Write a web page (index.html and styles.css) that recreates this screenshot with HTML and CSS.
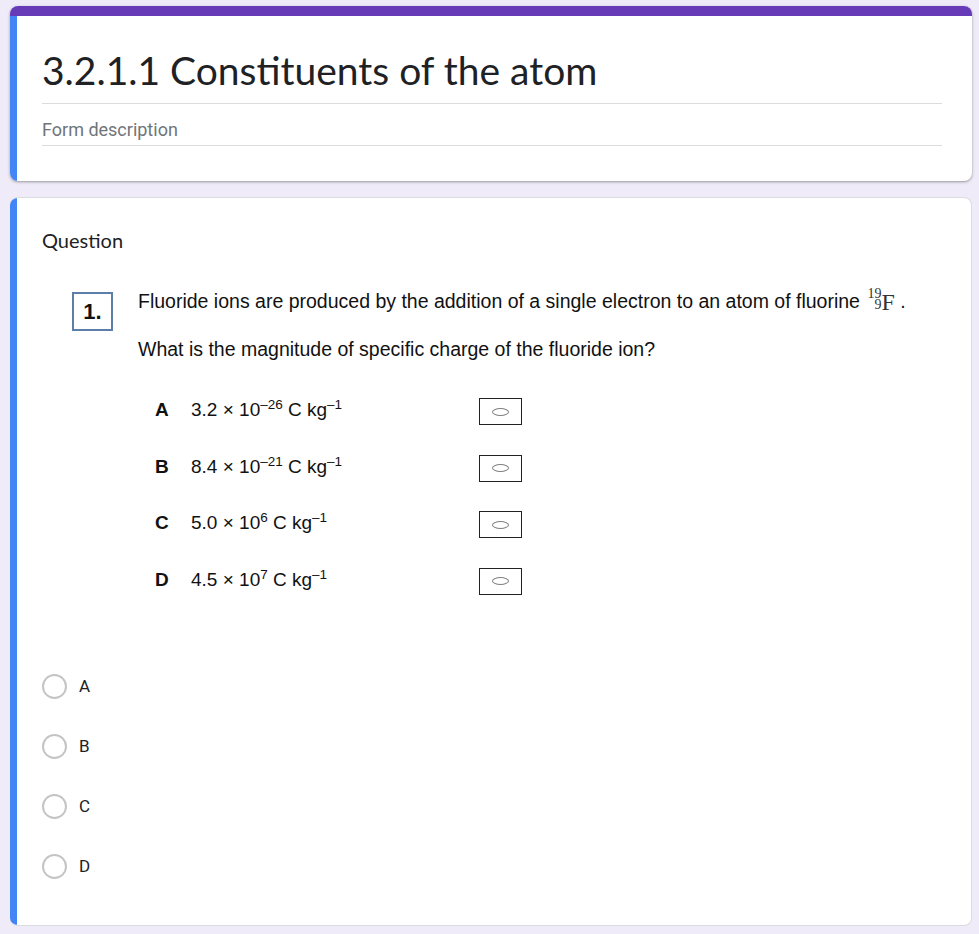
FILE: index.html
```html
<!DOCTYPE html>
<html lang="en">

<head>
    <meta charset="UTF-8">
    <meta name="viewport" content="width=device-width, initial-scale=1.0">
    <title>3.2.1.1 Constituents of the atom</title>
    <link rel="stylesheet" href="styles.css">
</head>

<body>
    <div class="page">
        <!-- Form header -->
        <div class="card header-card">
            <div class="card-accent"></div>
            <div class="card-body">
                <h1 class="form-title">3.2.1.1 Constituents of the atom</h1>
                <div class="form-desc">Form description</div>
            </div>
        </div>

        <!-- Question card -->
        <div class="card question-card">
            <div class="card-body">
                <div class="question-title">Question</div>

                <div class="question-image">
                    <div class="q-num">1.</div>
                    <div class="q-content">
                        <p class="q-line">Fluoride ions are produced by the addition of a single electron to an atom of fluorine
                            <span class="nuclide-nums"><span>19</span><span>9</span></span><span class="nuclide-sym">F</span> .</p>
                        <p class="q-line q-ask">What is the magnitude of specific charge of the fluoride ion?</p>

                        <div class="answers">
                            <div class="answer-row">
                                <span class="answer-key">A</span>
                                <span class="answer-val">3.2 × 10<sup>–26</sup> C kg<sup>–1</sup></span>
                                <span class="answer-box"><span class="oval"></span></span>
                            </div>
                            <div class="answer-row">
                                <span class="answer-key">B</span>
                                <span class="answer-val">8.4 × 10<sup>–21</sup> C kg<sup>–1</sup></span>
                                <span class="answer-box"><span class="oval"></span></span>
                            </div>
                            <div class="answer-row">
                                <span class="answer-key">C</span>
                                <span class="answer-val">5.0 × 10<sup>6</sup> C kg<sup>–1</sup></span>
                                <span class="answer-box"><span class="oval"></span></span>
                            </div>
                            <div class="answer-row">
                                <span class="answer-key">D</span>
                                <span class="answer-val">4.5 × 10<sup>7</sup> C kg<sup>–1</sup></span>
                                <span class="answer-box"><span class="oval"></span></span>
                            </div>
                        </div>
                    </div>
                </div>

                <div class="choices">
                    <label class="choice"><span class="radio"></span>A</label>
                    <label class="choice"><span class="radio"></span>B</label>
                    <label class="choice"><span class="radio"></span>C</label>
                    <label class="choice"><span class="radio"></span>D</label>
                </div>
            </div>
        </div>
    </div>
</body>

</html>
```

FILE: styles.css
```css
/* Global styles */
body {
    margin: 0;
    padding: 0;
    background-color: #f0ebf8;
    font-family: 'Roboto', 'Liberation Sans', sans-serif;
    color: #202124;
}

.page {
    padding: 6px 7px 0 10px;
}

.card {
    background-color: #ffffff;
    border-radius: 8px;
    overflow: hidden;
}

/* Header card */
.header-card {
    box-shadow: 0 1px 2px rgba(60, 64, 67, 0.35), 0 1px 3px 1px rgba(60, 64, 67, 0.12);
}

.card-accent {
    height: 10px;
    background-color: #673ab7;
}

.header-card .card-body {
    border-left: 7px solid #4285f4;
    padding: 32px 30px 35px 25px;
}

.form-title {
    margin: 0;
    padding-bottom: 11px;
    border-bottom: 1px solid #dadce0;
    font-family: 'Lato', 'Open Sans', sans-serif;
    font-weight: 400;
    font-size: 39px;
    line-height: 44px;
    color: #202124;
}

.form-desc {
    margin-top: 15px;
    padding-bottom: 5px;
    border-bottom: 1px solid #dadce0;
    font-size: 18px;
    line-height: 21px;
    color: #70757a;
}

/* Question card */
.question-card {
    margin-top: 16px;
    border: 1px solid #dadce0;
    border-left: 0;
}

.question-card .card-body {
    border-left: 7px solid #4285f4;
    padding: 30px 30px 29px 25px;
}

.question-title {
    font-family: 'Lato', 'Open Sans', sans-serif;
    font-size: 20px;
    line-height: 24px;
}

.question-image {
    display: flex;
    margin-top: 38px;
    font-family: 'Liberation Sans', Arial, sans-serif;
    color: #111;
}

.q-num {
    width: 37px;
    height: 35px;
    margin: 2px 25px 0 30px;
    border: 2px solid #5b7fa8;
    font-weight: bold;
    font-size: 22px;
    line-height: 35px;
    text-align: center;
}

.q-line {
    margin: 0;
    font-size: 19.5px;
    line-height: 22px;
}

.q-ask {
    margin-top: 26px;
}

/* 19/9 F nuclide notation */
.nuclide-nums {
    display: inline-block;
    margin: -6px 0 -2px 2px;
    font-family: 'Liberation Serif', 'Times New Roman', serif;
    font-size: 14px;
    line-height: 11px;
    color: #333;
    text-align: right;
    vertical-align: -1px;
}

.nuclide-nums span {
    display: block;
}

.nuclide-sym {
    font-family: 'Liberation Serif', 'Times New Roman', serif;
    font-size: 24px;
    line-height: 20px;
    color: #333;
    vertical-align: -2px;
}

.answers {
    margin-top: 22px;
    margin-left: 17px;
}

.answer-row {
    display: grid;
    grid-template-columns: 36px 288px 43px;
    align-items: center;
    height: 56.5px;
    font-size: 19px;
}

.answer-key {
    font-weight: bold;
}

.answer-val sup {
    font-size: 13.5px;
    line-height: 0;
    vertical-align: 7px;
}

.answer-box {
    display: flex;
    justify-content: center;
    align-items: center;
    height: 25px;
    margin-top: 3px;
    border: 1.5px solid #222;
}

.oval {
    width: 15px;
    height: 6px;
    border: 1.5px solid #808080;
    border-radius: 50%;
}

/* Choices */
.choices {
    margin-top: 48px;
}

.choice {
    display: flex;
    align-items: center;
    height: 60px;
    font-size: 17px;
}

.radio {
    width: 21px;
    height: 21px;
    margin-right: 12px;
    border: 2px solid #c4c4c4;
    border-radius: 50%;
}
```
